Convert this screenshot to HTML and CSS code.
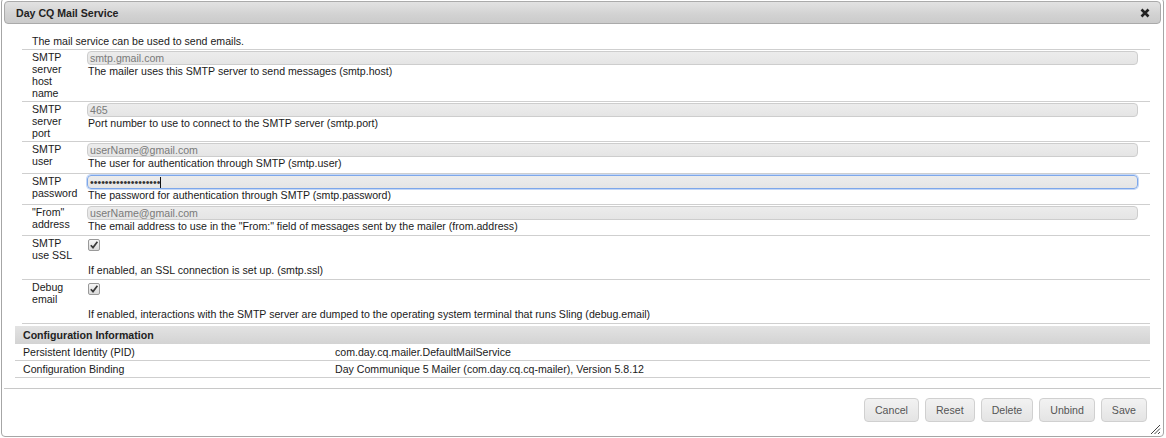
FILE: index.html
```html
<!DOCTYPE html>
<html>
<head>
<meta charset="utf-8">
<link rel="stylesheet" href="styles.css">
</head>
<body>
<div class="dialog">
  <div class="titlebar">
    <span class="title">Day CQ Mail Service</span>
    <span class="close"><svg width="10" height="10" viewBox="0 0 10 10"><path d="M1.5 1.5 L8.5 8.5 M8.5 1.5 L1.5 8.5" stroke="#222" stroke-width="2.6" fill="none"/></svg></span>
  </div>
  <div class="content">
    <div class="form">
      <div class="intro">The mail service can be used to send emails.</div>
      <div class="row">
        <div class="label">SMTP server host name</div>
        <div class="value"><div class="input">smtp.gmail.com</div><div class="desc">The mailer uses this SMTP server to send messages (smtp.host)</div></div>
      </div>
      <div class="row">
        <div class="label">SMTP server port</div>
        <div class="value"><div class="input">465</div><div class="desc">Port number to use to connect to the SMTP server (smtp.port)</div></div>
      </div>
      <div class="row">
        <div class="label">SMTP user</div>
        <div class="value tall"><div class="input">userName@gmail.com</div><div class="desc">The user for authentication through SMTP (smtp.user)</div></div>
      </div>
      <div class="row">
        <div class="label">SMTP password</div>
        <div class="value"><div class="input focus"><span class="dots">•••••••••••••••••••</span><span class="caret"></span></div><div class="desc">The password for authentication through SMTP (smtp.password)</div></div>
      </div>
      <div class="row">
        <div class="label">"From" address</div>
        <div class="value"><div class="input">userName@gmail.com</div><div class="desc">The email address to use in the "From:" field of messages sent by the mailer (from.address)</div></div>
      </div>
      <div class="row">
        <div class="label">SMTP use SSL</div>
        <div class="value"><div class="checkline"><span class="check"><svg width="10" height="10" viewBox="0 0 10 10"><path d="M1.8 5.2 L4 7.6 L8.4 1.8" stroke="#3a3a3a" stroke-width="1.7" fill="none"/></svg></span></div><div class="spacer"></div><div class="desc">If enabled, an SSL connection is set up. (smtp.ssl)</div></div>
      </div>
      <div class="row">
        <div class="label">Debug email</div>
        <div class="value"><div class="checkline"><span class="check"><svg width="10" height="10" viewBox="0 0 10 10"><path d="M1.8 5.2 L4 7.6 L8.4 1.8" stroke="#3a3a3a" stroke-width="1.7" fill="none"/></svg></span></div><div class="spacer"></div><div class="desc">If enabled, interactions with the SMTP server are dumped to the operating system terminal that runs Sling (debug.email)</div></div>
      </div>
    </div>
    <div class="config">
      <div class="config-head">Configuration Information</div>
      <div class="config-row"><div>Persistent Identity (PID)</div><div>com.day.cq.mailer.DefaultMailService</div></div>
      <div class="config-row"><div>Configuration Binding</div><div>Day Communique 5 Mailer (com.day.cq.cq-mailer), Version 5.8.12</div></div>
    </div>
  </div>
  <div class="buttons">
    <button class="btn">Cancel</button>
    <button class="btn">Reset</button>
    <button class="btn">Delete</button>
    <button class="btn">Unbind</button>
    <button class="btn">Save</button>
  </div>
  <div class="resize"><svg width="11" height="11" viewBox="0 0 11 11"><path d="M10 1 L1 10 M10 4.5 L4.5 10 M10 8 L8 10" stroke="#444" stroke-width="1" fill="none"/></svg></div>
</div>
</body>
</html>
```

FILE: styles.css
```css
html, body {
  margin: 0;
  padding: 0;
  background: #fff;
  overflow: hidden;
}
body {
  font-family: "Liberation Sans", Arial, sans-serif;
  font-size: 10.6px;
  line-height: 12px;
  color: #1a1a1a;
}
.dialog {
  position: relative;
  box-sizing: border-box;
  width: 1163px;
  margin: -2px 0 0 1px;
  border: 1px solid #a6a6a6;
  border-radius: 4px;
  padding: 2px;
  background: #fff;
}
.titlebar {
  display: flex;
  align-items: center;
  justify-content: space-between;
  height: 21px;
  padding: 0 10px 0 11px;
  border: 1px solid #aaa;
  border-radius: 4px;
  background: linear-gradient(#e2e2e2, #d2d2d2 60%, #cbcbcb);
}
.title {
  font-weight: bold;
  color: #222;
}
.close {
  display: flex;
  width: 10px;
  height: 10px;
}
.content {
  padding: 8px 11px 10px 11px;
}
.form {
  margin-left: 7px;
}
.intro {
  padding: 3px 0 2px 10px;
  border-bottom: 1px solid #cfcfcf;
}
.row {
  display: grid;
  grid-template-columns: 47px 1fr;
  column-gap: 8px;
  padding: 1px 0 2px 10px;
  border-bottom: 1px solid #cfcfcf;
}
.value {
  padding: 0 12px 1px 0;
}
.value.tall {
  padding-bottom: 2px;
}
.desc {
  padding-left: 1px;
}
.input {
  box-sizing: border-box;
  height: 14px;
  line-height: 12px;
  padding: 0 2px;
  border: 1px solid #cdcdcd;
  border-radius: 4px;
  background: linear-gradient(#ececec, #e5e5e5);
  color: #7a7a7a;
  display: flex;
  align-items: center;
}
.input.focus {
  border-color: #7da7ea;
  box-shadow: 0 0 0 1px rgba(125, 167, 234, 0.45);
  color: #333;
}
.caret {
  display: inline-block;
  width: 1px;
  height: 11px;
  background: #111;
}
.checkline {
  height: 15px;
  padding-left: 1px;
  display: flex;
  align-items: center;
}
.check {
  box-sizing: border-box;
  width: 12px;
  height: 12px;
  border: 1px solid #999;
  border-radius: 2px;
  background: linear-gradient(#f6f6f6, #dadada);
  display: flex;
  align-items: center;
  justify-content: center;
}
.spacer {
  height: 12px;
}
.config {
  margin-top: 2px;
}
.config-head {
  padding: 3px 8px;
  font-weight: bold;
  color: #222;
  background: linear-gradient(#e3e3e3, #d3d3d3);
}
.config-row {
  display: grid;
  grid-template-columns: 312px 1fr;
  padding: 2px 8px;
  border-bottom: 1px solid #cfcfcf;
}
.buttons {
  display: flex;
  justify-content: flex-end;
  gap: 6px;
  padding: 9px 14px 12px 0;
  border-top: 1px solid #c8c8c8;
}
.btn {
  box-sizing: border-box;
  height: 24px;
  padding: 0 10px;
  font-family: "Liberation Sans", Arial, sans-serif;
  font-size: 10.6px;
  color: #555;
  border: 1px solid #d0d0d0;
  border-radius: 4px;
  background: linear-gradient(#f2f2f2, #e4e4e4);
}
.resize {
  position: absolute;
  right: 2px;
  bottom: 1px;
  width: 11px;
  height: 11px;
}
```
